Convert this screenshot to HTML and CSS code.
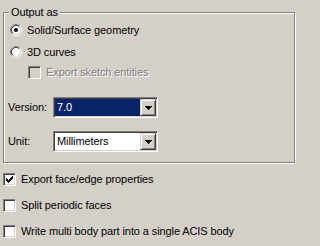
FILE: index.html
```html
<!DOCTYPE html>
<html>
<head>
<meta charset="utf-8">
<link rel="stylesheet" href="styles.css">
</head>
<body>
<fieldset class="group">
  <legend class="group-title">Output as</legend>
  <div class="opt-row">
    <svg class="radio" width="12" height="12" viewBox="0 0 12 12">
      <circle cx="6" cy="6" r="4.5" fill="#fff"/>
      <path d="M2.11 9.89 A5.5 5.5 0 0 1 9.89 2.11" stroke="#808080" fill="none"/>
      <path d="M9.89 2.11 A5.5 5.5 0 0 1 2.11 9.89" stroke="#fff" fill="none"/>
      <path d="M2.82 9.18 A4.5 4.5 0 0 1 9.18 2.82" stroke="#404040" fill="none"/>
      <path d="M9.18 2.82 A4.5 4.5 0 0 1 2.82 9.18" stroke="#d4d0c8" fill="none"/>
      <circle cx="6" cy="6" r="2" fill="#000"/>
    </svg>
    <span class="opt-label">Solid/Surface geometry</span>
  </div>
  <div class="opt-row">
    <svg class="radio" width="12" height="12" viewBox="0 0 12 12">
      <circle cx="6" cy="6" r="4.5" fill="#fff"/>
      <path d="M2.11 9.89 A5.5 5.5 0 0 1 9.89 2.11" stroke="#808080" fill="none"/>
      <path d="M9.89 2.11 A5.5 5.5 0 0 1 2.11 9.89" stroke="#fff" fill="none"/>
      <path d="M2.82 9.18 A4.5 4.5 0 0 1 9.18 2.82" stroke="#404040" fill="none"/>
      <path d="M9.18 2.82 A4.5 4.5 0 0 1 2.82 9.18" stroke="#d4d0c8" fill="none"/>
    </svg>
    <span class="opt-label">3D curves</span>
  </div>
  <div class="sub-row">
    <span class="checkbox disabled"></span>
    <span class="check-label disabled-text">Export sketch entities</span>
  </div>
  <div class="combo-row first">
    <span class="combo-label">Version:</span>
    <div class="combo">
      <span class="combo-field selected">7.0</span>
      <span class="combo-btn">
        <svg width="7" height="4" viewBox="0 0 7 4" shape-rendering="crispEdges"><path d="M0 0H7V1H6V2H5V3H4V4H3V3H2V2H1V1H0Z" fill="#000"/></svg>
      </span>
    </div>
  </div>
  <div class="combo-row">
    <span class="combo-label">Unit:</span>
    <div class="combo">
      <span class="combo-field">Millimeters</span>
      <span class="combo-btn">
        <svg width="7" height="4" viewBox="0 0 7 4" shape-rendering="crispEdges"><path d="M0 0H7V1H6V2H5V3H4V4H3V3H2V2H1V1H0Z" fill="#000"/></svg>
      </span>
    </div>
  </div>
</fieldset>
<div class="checks">
  <div class="check-row">
    <span class="checkbox">
      <svg width="9" height="9" viewBox="2 2 9 9" shape-rendering="crispEdges"><path d="M3 5H4V6H5V7H6V6H7V5H8V4H9V3H10V6H9V7H8V8H7V9H6V10H5V9H4V8H3Z" fill="#000"/></svg>
    </span>
    <span class="check-label">Export face/edge properties</span>
  </div>
  <div class="check-row">
    <span class="checkbox"></span>
    <span class="check-label">Split periodic faces</span>
  </div>
  <div class="check-row">
    <span class="checkbox"></span>
    <span class="check-label">Write multi body part into a single ACIS body</span>
  </div>
</div>
</body>
</html>
```
FILE: styles.css
```css
html, body {
  margin: 0;
  padding: 0;
}
body {
  background: #d4d0c8;
  color: #000;
  font-family: "Liberation Sans", Arial, sans-serif;
  font-size: 11px;
  letter-spacing: -0.1px;
  width: 301px;
  height: 246px;
  overflow: hidden;
}
.group {
  box-sizing: border-box;
  width: 292px;
  margin: 6px 0 0 3px;
  padding: 0 0 10px 0;
  border: 1px solid #808080;
  box-shadow: inset 1px 1px 0 #fff, 1px 1px 0 #fff;
  min-width: 0;
}
.group-title {
  margin-left: 5px;
  padding: 0 2px;
  line-height: 13px;
  height: 13px;
  background: #d4d0c8;
}
.opt-row {
  display: flex;
  align-items: center;
  height: 22px;
  padding-left: 6px;
}
.radio {
  display: block;
  flex: none;
}
.opt-label {
  margin-left: 5px;
  line-height: 12px;
}
.sub-row {
  display: flex;
  align-items: flex-start;
  height: 18px;
  box-sizing: border-box;
  padding: 3px 0 0 24px;
}
.checkbox {
  box-sizing: border-box;
  width: 13px;
  height: 13px;
  flex: none;
  background: #fff;
  border: 1px solid;
  border-color: #808080 #fff #fff #808080;
  box-shadow: inset 1px 1px 0 #404040, inset -1px -1px 0 #d4d0c8;
  display: flex;
  align-items: center;
  justify-content: center;
}
.checkbox.disabled {
  background: #d4d0c8;
}
.checkbox svg {
  display: block;
}
.check-label {
  margin-left: 5px;
  line-height: 13px;
  white-space: nowrap;
}
.disabled-text {
  color: #808080;
  text-shadow: 1px 1px 0 #fff;
}
.combo-row {
  display: flex;
  align-items: center;
  height: 21px;
  padding-left: 4px;
  margin-top: 13px;
}
.combo-row.first {
  margin-top: 16px;
}
.combo-label {
  width: 45px;
  line-height: 13px;
  flex: none;
}
.combo {
  box-sizing: border-box;
  width: 105px;
  height: 21px;
  display: flex;
  padding: 1px;
  background: #fff;
  border: 1px solid;
  border-color: #808080 #fff #fff #808080;
  box-shadow: inset 1px 1px 0 #404040, inset -1px -1px 0 #d4d0c8;
}
.combo-field {
  flex: 1;
  line-height: 17px;
  padding-left: 2px;
  white-space: nowrap;
}
.combo-field.selected {
  background: #0a246a;
  color: #fff;
}
.combo-btn {
  box-sizing: border-box;
  width: 16px;
  height: 17px;
  flex: none;
  background: #d4d0c8;
  border: 1px solid;
  border-color: #d4d0c8 #404040 #404040 #d4d0c8;
  box-shadow: inset 1px 1px 0 #fff, inset -1px -1px 0 #808080;
  display: flex;
  align-items: center;
  justify-content: center;
}
.combo-btn svg {
  display: block;
}
.checks {
  margin-top: 3px;
}
.check-row {
  display: flex;
  align-items: flex-start;
  box-sizing: border-box;
  height: 26px;
  padding: 7px 0 0 3px;
}
.check-row .check-label {
  margin-left: 5px;
}
```
